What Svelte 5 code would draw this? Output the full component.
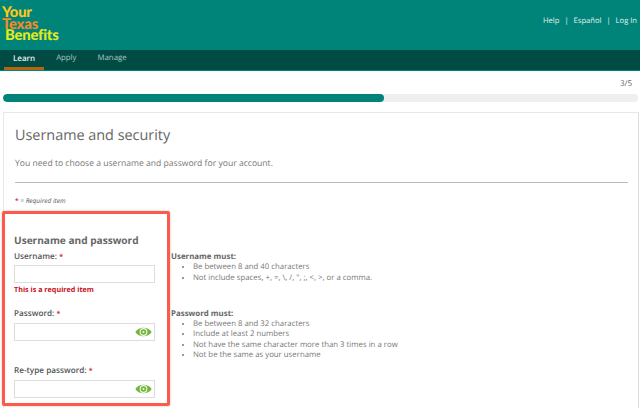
<script>
  const usernameRules = [
    "Be between 8 and 40 characters",
    'Not include spaces, +, =, \\, /, ", ;, <, >, or a comma.',
  ];
  const passwordRules = [
    "Be between 8 and 32 characters",
    "Include at least 2 numbers",
    "Not have the same character more than 3 times in a row",
    "Not be the same as your username",
  ];
  const progress = (3 / 5) * 100;
</script>

{#snippet eye()}
  <svg class="eye" viewBox="0 0 17 10" width="17" height="10" aria-hidden="true">
    <path d="M.3 5 C4 -.8 13 -.8 16.7 5 C13 10.8 4 10.8 .3 5 Z" fill="#72b53c" />
    <circle cx="8.5" cy="5" r="3.9" fill="#f2f8ea" />
    <circle cx="8.5" cy="5" r="2.8" fill="#72b53c" />
    <circle cx="8.5" cy="5" r="1.1" fill="#f2f8ea" />
  </svg>
{/snippet}

<header class="top">
  <div class="logo">
    <span class="your">Your</span>
    <span class="texas">Texas</span>
    <span class="benefits">Benefits</span>
  </div>
  <nav class="util">
    <span>Help</span><i>|</i><span>Español</span><i>|</i><span>Log In</span>
  </nav>
</header>

<nav class="tabs">
  <span class="tab active">Learn</span>
  <span class="tab">Apply</span>
  <span class="tab">Manage</span>
</nav>

<div class="step">3/5</div>
<div class="track"><div class="fill" style="width: {progress}%"></div></div>

<main class="card">
  <h1>Username and security</h1>
  <p class="intro">You need to choose a username and password for your account.</p>
  <hr />
  <p class="required"><b>*</b> = Required item</p>

  <div class="columns">
    <form class="form">
      <h2>Username and password</h2>
      <label for="user">Username: <b>*</b></label>
      <input id="user" type="text" />
      <p class="error">This is a required item</p>

      <label class="pw" for="pass">Password: <b>*</b></label>
      <div class="field">
        <input id="pass" type="password" />
        {@render eye()}
      </div>

      <label class="pw2" for="again">Re-type password: <b>*</b></label>
      <div class="field">
        <input id="again" type="password" />
        {@render eye()}
      </div>
    </form>

    <div class="rules">
      <strong>Username must:</strong>
      <ul>
        {#each usernameRules as rule}
          <li>{rule}</li>
        {/each}
      </ul>
      <strong class="second">Password must:</strong>
      <ul>
        {#each passwordRules as rule}
          <li>{rule}</li>
        {/each}
      </ul>
    </div>
  </div>
</main>

<style>
  :global(body) {
    background: #fff;
    overflow: hidden;
  }

  * {
    box-sizing: border-box;
    font-family: "Open Sans", "Liberation Sans", sans-serif;
    text-rendering: geometricPrecision;
  }

  .top {
    height: 50px;
    background: #00847a;
    display: flex;
    justify-content: space-between;
    padding: 7px 3px 0 2px;
  }

  .logo {
    display: flex;
    flex-direction: column;
    align-items: flex-start;
  }
  .logo span {
    font-family: "Lato", sans-serif;
    font-size: 14.8px;
    line-height: 11.5px;
    height: 11.5px;
    font-weight: 900;
    letter-spacing: -0.2px;
  }
  .your { color: #ffc815; }
  .texas { color: #f58a23; }
  .benefits { color: #e4e91c; margin-left: 3px; }

  .util {
    display: flex;
    align-items: center;
    height: 27px;
    color: #e2f0ee;
    font-size: 7.6px;
  }
  .util i {
    font-style: normal;
    margin: 0 5px;
  }

  .tabs {
    height: 21px;
    background: #004c45;
    border-bottom: 1px solid #00847a;
    display: flex;
    gap: 3px;
    padding-left: 4px;
  }
  .tab {
    padding: 0 9px;
    color: #a9c6c2;
    font-size: 7.8px;
    line-height: 17px;
  }
  .tab.active {
    color: #e8f2f0;
    font-size: 8px;
    font-weight: 600;
    border-bottom: 3px solid #b4650f;
    height: 20px;
  }

  .step {
    margin-top: 7px;
    padding-right: 8px;
    text-align: right;
    color: #666;
    font-size: 8px;
    line-height: 11px;
  }

  .track {
    margin: 5px 2px 0 3px;
    height: 8px;
    background: #efefef;
    border-radius: 4px;
    overflow: hidden;
  }
  .fill {
    height: 100%;
    background: #00847a;
    border-radius: 4px;
  }

  .card {
    margin: 10px 1px 0 3px;
    border: 1px solid #e8e8e8;
    border-right-color: #ddd;
    padding: 12px 10px 0 0;
    height: 300px;
  }

  h1 {
    margin: 0 0 0 11px;
    font-size: 14.4px;
    font-weight: 400;
    line-height: 22px;
    color: #666;
  }

  .intro {
    margin: 9px 0 0 11px;
    font-size: 8.6px;
    line-height: 14px;
    color: #777;
  }

  hr {
    margin: 12px 0 0 11px;
    border: 0;
    border-top: 1px solid #bbb;
  }

  .required {
    margin: 13px 0 0 11px;
    font-size: 6.5px;
    line-height: 10px;
    font-style: italic;
    color: #555;
  }

  b {
    color: #d9343d;
    font-weight: 700;
    font-style: normal;
  }

  .columns {
    display: flex;
    align-items: flex-start;
    margin-top: 5px;
    margin-left: -2px;
  }

  .form {
    width: 168px;
    height: 195px;
    flex: none;
    border: 3px solid #fb5a4c;
    border-radius: 2px;
    padding: 19px 12px 0 9px;
    display: flex;
    flex-direction: column;
    box-shadow: 0 0 2px rgba(120, 60, 50, 0.4);
  }

  h2 {
    margin: 0;
    font-size: 10.1px;
    line-height: 14px;
    font-weight: 700;
    color: #666;
  }

  label {
    font-size: 8.2px;
    line-height: 12px;
    font-weight: 600;
    color: #555;
    margin-top: 4px;
    margin-bottom: 1px;
  }
  label b {
    font-size: 7px;
  }
  label.pw {
    margin-top: 12px;
    margin-bottom: 2px;
  }
  label.pw2 {
    margin-top: 24px;
    margin-bottom: 2px;
  }

  input {
    display: block;
    width: 100%;
    height: 18px;
    border: 1px solid #ddd;
    background: #fff;
    padding: 0;
  }

  .error {
    margin: 1px 0 0;
    color: #c8101e;
    font-size: 7.2px;
    line-height: 12px;
    font-weight: 700;
  }

  .field {
    position: relative;
  }
  .eye {
    position: absolute;
    right: 3px;
    top: 4px;
  }

  .rules {
    margin: 41px 0 0 1px;
    font-size: 7.8px;
    line-height: 10.3px;
    color: #777;
  }
  .rules strong {
    display: block;
    font-weight: 700;
    color: #666;
    font-size: 7.9px;
  }
  .rules strong.second {
    margin-top: 26px;
  }
  ul {
    margin: 0;
    padding: 0 0 0 22px;
  }
</style>
